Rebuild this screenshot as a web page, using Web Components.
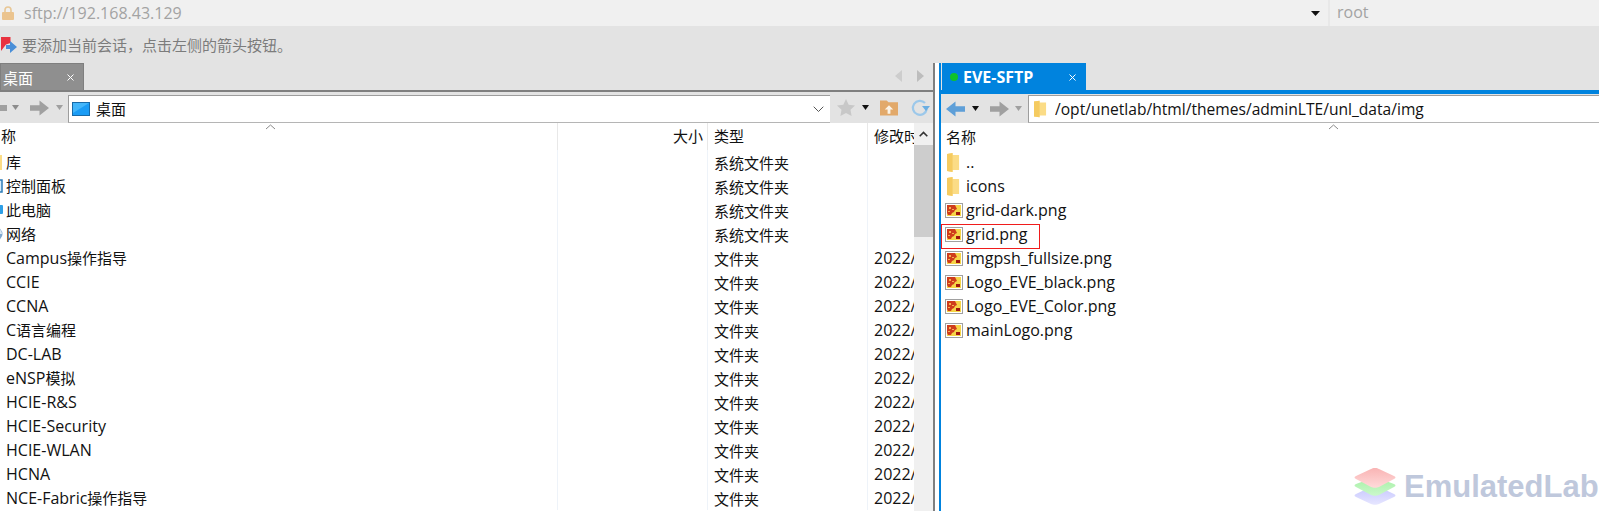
<!DOCTYPE html>
<html lang="zh">
<head>
<meta charset="utf-8">
<title>SFTP</title>
<style>
  html, body { margin: 0; height: 100%; overflow: hidden; background: #fff; }
  body {
    font-family: "Open Sans", "Noto Sans CJK SC", sans-serif;
    font-size: 16px;
    color: #111;
  }
  .app { display: flex; flex-direction: column; height: 511px; position: relative; }
  .cn { font-size: 15px; }
</style>
</head>
<body>

<template id="session-bar-tpl">
  <style>
    :host { display: flex; align-items: center; height: 26px; background: #f0f0f0; color: #a3a3a3; font-size: 16px; flex: none; }
    svg { display: block; }
    .lock { margin-left: 2px; flex: none; }
    .url { margin-left: 10px; flex: 1; }
    .caret { margin-right: 8px; flex: none; }
    .user { width: 271px; height: 26px; line-height: 25px; box-sizing: border-box; padding-left: 7px; border-left: 2px solid #e8e8e8; flex: none; }
  </style>
  <svg class="lock" width="12" height="14" viewBox="0 0 12 14"><path d="M3 6V4a3 3 0 0 1 6 0v2" fill="none" stroke="#e8c796" stroke-width="1.6"/><rect y="6" width="12" height="8" rx="1" fill="#ebc48f"/></svg>
  <span class="url"><slot name="url"></slot></span>
  <svg class="caret" width="9" height="5" viewBox="0 0 9 5"><path d="M0 0h9L4.500 5z" fill="#111"/></svg>
  <span class="user"><slot name="user"></slot></span>
</template>

<template id="hint-bar-tpl">
  <style>
    :host { display: flex; align-items: center; height: 37px; background: #e3e3e3; color: #7c7c7c; font-size: 15px; flex: none; }
    svg { display: block; flex: none; margin-right: 5px; }
  </style>
  <svg width="17" height="18" viewBox="0 0 17 18"><path d="M1 1h9.500v6L6 8.500 1 15z" fill="#e8323f"/><path d="M6 9h4V5l7 6-7 6v-4H6z" fill="#4a8fd8"/></svg>
  <slot></slot>
</template>

<template id="sftp-pane-tpl">
  <style>
    :host { display: flex; flex-direction: column; min-width: 0; }
    .tabs { height: 27px; display: flex; background: #e3e3e3; flex: none; }
    .line { height: 2px; background: #7f7f7f; flex: none; }
    .toolbar { height: 31px; display: flex; background: #e3e3e3; flex: none; align-items: stretch; }
    .list { flex: 1; min-height: 0; display: flex; background: #fff; overflow: hidden; }
    :host([active]) .line { height: 4px; background: #0083de; }
    :host([active]) .toolbar { height: 29px; }
    :host([active]) { border-left: 2px solid #0083de; }
    :host(:not([active])) { border-right: 2px solid #7f7f7f; }
  </style>
  <div class="tabs"><slot name="tabs"></slot></div>
  <div class="line"></div>
  <div class="toolbar"><slot name="toolbar"></slot></div>
  <div class="list"><slot></slot></div>
</template>

<template id="pane-tab-tpl">
  <style>
    :host { display: flex; align-items: center; box-sizing: border-box; color: #fff; font-size: 15px; background: #8f8f8f; border: 1px solid #7f7f7f; border-bottom: 0; flex: none; position: relative; }
    :host([active]) { background: #0083de; border-color: #0083de; font-weight: 700; font-size: 16px; }
    .dot { width: 8px; height: 8px; border-radius: 50%; background: #0fc32a; margin: 0 5px 0 7px; display: none; }
    :host([active]) .dot { display: block; }
    .label { flex: 1; padding-left: 2px; }
    :host([active]) .label { padding-left: 0; }
    svg { display: block; margin-right: 9px; flex: none; }
  </style>
  <span class="dot"></span>
  <span class="label"><slot></slot></span>
  <svg width="7" height="7" viewBox="0 0 7 7"><path d="M.5 .5l6 6M6.500 .5l-6 6" stroke="#fff" stroke-width="1"/></svg>
</template>

<template id="nav-toolbar-tpl">
  <style>
    :host { display: flex; align-items: center; flex: 1; min-width: 0; align-self: stretch; }
    svg { display: block; flex: none; }
    .nav { display: flex; align-items: center; flex: none; }
    .box { flex: 1; min-width: 0; height: 28px; background: #fff; box-sizing: border-box; border-left: 1px solid #9d9d9d; border-top: 1px solid #9d9d9d; border-bottom: 1px solid #b5b5b5; display: flex; align-items: center; align-self: flex-end; }
    .path { flex: 1; white-space: nowrap; overflow: hidden; }
    .extra { display: flex; align-items: center; flex: none; }
  </style>
  <div class="nav"><slot name="nav"></slot></div>
  <div class="box"><slot name="icon"></slot><span class="path"><slot name="path"></slot></span><slot name="drop"></slot></div>
  <div class="extra"><slot name="extra"></slot></div>
</template>

<template id="file-list-tpl">
  <style>
    :host { display: block; flex: 1; min-width: 0; position: relative; }
    .head { display: flex; height: 27px; align-items: center; position: relative; }
    .sort { position: absolute; top: 1px; left: var(--sort-left, 0); display: block; }
  </style>
  <div class="head"><slot name="head"></slot><svg class="sort" width="11" height="6" viewBox="0 0 11 6"><path d="M1 5l4.500-4L10 5" fill="none" stroke="#8a8a8a"/></svg></div>
  <slot></slot>
</template>

<template id="file-row-tpl">
  <style>
    :host { display: grid; grid-template-columns: var(--cols, 1fr); height: 24px; position: relative; white-space: nowrap; }
    :host([marked])::after { content: ""; position: absolute; left: 0; top: 2px; width: 99px; height: 25px; box-sizing: border-box; border: 1px solid #f01c1c; }
    .name, .size, .type, .date { display: flex; align-items: center; min-width: 0; }
    .name { gap: var(--icon-gap, 3px); margin-left: var(--name-left, -11px); }
    svg { display: block; flex: none; }
    .size, .type, .date { border-left: 1px solid #eef3f9; }
    .type, .date { padding-left: 6px; overflow: hidden; }
    :host([plain]) .size, :host([plain]) .type, :host([plain]) .date { display: none; }
  </style>
  <span class="name"><slot name="icon"></slot><span><slot></slot></span></span>
  <span class="size"></span>
  <span class="type"><slot name="type"></slot></span>
  <span class="date"><slot name="date"></slot></span>
</template>

<template id="scroll-bar-tpl">
  <style>
    :host { display: flex; flex-direction: column; width: 19px; background: #f0f0f0; flex: none; }
    .up { height: 22px; display: flex; align-items: center; justify-content: center; }
    .thumb { height: 92px; background: #cdcdcd; }
    svg { display: block; }
  </style>
  <div class="up"><svg width="9" height="6" viewBox="0 0 9 6"><path d="M.7 5.200L4.500 1.400l3.800 3.800" fill="none" stroke="#333" stroke-width="1.600"/></svg></div>
  <div class="thumb"></div>
</template>

<template id="water-mark-tpl">
  <style>
    :host { position: absolute; right: 0; bottom: 6px; width: 246px; height: 37px; display: flex; align-items: center; gap: 7px; font: 700 31px "Liberation Sans", sans-serif; color: #bfc8dc; white-space: nowrap; }
    svg { display: block; flex: none; }
  </style>
  <svg width="44" height="37" viewBox="0 0 44 37">
    <defs>
      <linearGradient id="wm-red" x1="0" y1="0" x2="0" y2="1"><stop offset="0" stop-color="#f9b4b4"/><stop offset="1" stop-color="#ffdada"/></linearGradient>
      <linearGradient id="wm-green" x1="0" y1="0" x2="0" y2="1"><stop offset="0" stop-color="#a5f0a5"/><stop offset="1" stop-color="#cbf8cb"/></linearGradient>
      <linearGradient id="wm-blue" x1="0" y1="0" x2="0" y2="1"><stop offset="0" stop-color="#c4c4ff"/><stop offset="1" stop-color="#e6e6ff"/></linearGradient>
    </defs>
    <path d="M22 17L41 26c2 1 2 2 0 3L26 36c-2 1-6 1-8 0L3 29c-2-1-2-2 0-3z" fill="url(#wm-blue)"/>
    <path d="M22 9L41 16c2 1 2 2 0 3L26 27c-2 1-6 1-8 0L3 19c-2-1-2-2 0-3z" fill="url(#wm-green)"/>
    <path d="M22 0c2 0 3 .5 4 1l15 7c2 1 2 2 0 3L26 19c-2 1-6 1-8 0L3 11c-2-1-2-2 0-3l15-7c1-.5 2-1 4-1z" fill="url(#wm-red)"/>
  </svg>
  <slot></slot>
</template>

<main class="app">
  <session-bar>
    <span slot="url">sftp://192.168.43.129</span>
    <span slot="user">root</span>
  </session-bar>
  <hint-bar>要添加当前会话，点击左侧的箭头按钮。</hint-bar>

  <div style="flex:1;min-height:0;display:grid;grid-template-columns:935px 1fr;background:#fff;column-gap:4px">
    <sftp-pane>
      <pane-tab slot="tabs" style="width:84px">桌面</pane-tab>
      <div slot="tabs" style="flex:1;display:flex;align-items:center;justify-content:flex-end;gap:15px;padding:0 9px 1px 0">
        <svg width="7" height="12" viewBox="0 0 7 12"><path d="M7 0v12L0 6z" fill="#cdcdcd"/></svg>
        <svg width="7" height="12" viewBox="0 0 7 12"><path d="M0 0v12l7-6z" fill="#bdbdbd"/></svg>
      </div>
      <nav-toolbar slot="toolbar">
        <svg slot="nav" width="7" height="6" viewBox="0 0 7 6"><rect width="7" height="6" fill="#a0a0a0"/></svg>
        <svg slot="nav" width="7" height="5" viewBox="0 0 7 5" style="margin-left:5px"><path d="M0 0h7L3.500 5z" fill="#8c8c8c"/></svg>
        <svg slot="nav" width="19" height="16" viewBox="0 0 20 16" style="margin-left:11px"><path d="M0 5h10V0l10 8-10 8v-5H0z" fill="#a0a0a0"/></svg>
        <svg slot="nav" width="7" height="5" viewBox="0 0 7 5" style="margin:0 5px 0 7px"><path d="M0 0h7L3.500 5z" fill="#a0a0a0"/></svg>
        <svg slot="icon" width="18" height="14" viewBox="0 0 18 14" style="margin:0 6px 0 3px"><rect x=".5" y=".5" width="17" height="13" fill="#1a9cf5" stroke="#176aa8"/><path d="M1 1h16L1 11z" fill="#43b6fa"/></svg>
        <span slot="path" class="cn">桌面</span>
        <svg slot="drop" width="11" height="7" viewBox="0 0 11 7" style="margin-right:6px"><path d="M.7 .7L5.500 5.500l4.800-4.800" fill="none" stroke="#555" stroke-width="1"/></svg>
        <svg slot="extra" width="18" height="17" viewBox="0 0 16 15" style="margin-left:7px"><path d="M8 0l2.400 5 5.600.7-4 3.900 1 5.400L8 12.400 3 15l1-5.400-4-3.900L5.600 5z" fill="#c8c8c8"/></svg>
        <svg slot="extra" width="7" height="5" viewBox="0 0 7 5" style="margin-left:7px"><path d="M0 0h7L3.500 5z" fill="#111"/></svg>
        <svg slot="extra" width="18" height="16" viewBox="0 0 19 16" style="margin-left:11px"><path d="M0 0h7l2 2h10v14H0z" fill="#e2a96a"/><path d="M9.500 5l4.500 4.500h-3V14H8V9.500H5z" fill="#fbf3e6"/></svg>
        <svg slot="extra" width="20" height="18" viewBox="0 0 20 18" style="margin:0 3px 0 12px"><path d="M15 4a7 7 0 1 0 1.800 6" fill="none" stroke="#9cc8ea" stroke-width="2.200"/><path d="M12 7h8l-4 5z" fill="#6aaee2"/></svg>
      </nav-toolbar>
      <div style="display:flex;flex:1;min-height:0">
        <file-list id="local" style="--sort-left:265px">
          <div slot="head" style="display:grid;grid-template-columns:557px 150px 160px 47px;width:100%;height:100%;align-items:stretch" class="cn">
            <span style="margin-left:1px;line-height:27px">称</span>
            <span style="border-left:1px solid #e8e8e8;text-align:right;padding-right:4px;line-height:27px">大小</span>
            <span style="border-left:1px solid #e8e8e8;padding-left:6px;line-height:27px">类型</span>
            <span style="border-left:1px solid #e8e8e8;padding-left:6px;line-height:27px;overflow:hidden;white-space:nowrap">修改时间</span>
          </div>
        </file-list>
        <scroll-bar></scroll-bar>
      </div>
    </sftp-pane>

    <sftp-pane active>
      <pane-tab slot="tabs" active style="width:144px;margin-left:1px;height:27px">EVE-SFTP</pane-tab>
      <nav-toolbar slot="toolbar" style="font-size:15.600px">
        <svg slot="nav" width="19" height="16" viewBox="0 0 20 16" style="margin-left:5px"><path d="M20 5H10V0L0 8l10 8v-5h10z" fill="#5e9fd8"/></svg>
        <svg slot="nav" width="7" height="5" viewBox="0 0 7 5" style="margin-left:7px"><path d="M0 0h7L3.500 5z" fill="#111"/></svg>
        <svg slot="nav" width="19" height="16" viewBox="0 0 20 16" style="margin-left:11px"><path d="M0 5h10V0l10 8-10 8v-5H0z" fill="#a0a0a0"/></svg>
        <svg slot="nav" width="7" height="5" viewBox="0 0 7 5" style="margin:0 6px 0 6px"><path d="M0 0h7L3.500 5z" fill="#a0a0a0"/></svg>
        <svg slot="icon" width="13" height="18" viewBox="0 0 14 18" style="margin:0 8px 0 5px"><path d="M0 1l6-1v2h7v14H6v2L0 17z" fill="#fbdc86"/><path d="M0 1l6-1v18l-6-1z" fill="#f5cb60"/></svg>
        <span slot="path">/opt/unetlab/html/themes/adminLTE/unl_data/img</span>
      </nav-toolbar>
      <file-list id="remote" style="--sort-left:387px">
        <span slot="head" class="cn" style="margin-left:5px">名称</span>
      </file-list>
    </sftp-pane>
  </div>

  <water-mark>EmulatedLab</water-mark>
</main>

<script>
function define(name, tplId) {
  customElements.define(name, class extends HTMLElement {
    constructor() {
      super();
      this.attachShadow({ mode: 'open' });
      this.shadowRoot.appendChild(document.getElementById(tplId).content.cloneNode(true));
    }
  });
}

define('session-bar', 'session-bar-tpl');
define('hint-bar', 'hint-bar-tpl');
define('sftp-pane', 'sftp-pane-tpl');
define('pane-tab', 'pane-tab-tpl');
define('nav-toolbar', 'nav-toolbar-tpl');
define('file-list', 'file-list-tpl');
define('file-row', 'file-row-tpl');
define('scroll-bar', 'scroll-bar-tpl');
define('water-mark', 'water-mark-tpl');

const folder = '<svg slot="icon" width="13" height="19" viewBox="0 0 14 18" preserveAspectRatio="none"><path d="M0 1l6-1v2h7v14H6v2L0 17z" fill="#fbdc86"/><path d="M0 1l6-1v18l-6-1z" fill="#f5cb60"/></svg>';
const image = '<svg slot="icon" width="18" height="15" viewBox="0 0 18 15"><rect x=".5" y=".5" width="17" height="14" fill="#fff" stroke="#a0a0a0"/><rect x="2" y="2" width="14" height="11" fill="#f6d548"/><path d="M2 2h8l1 2 1 2-2 1-1 2-2 1-1 2H3L2 10z" fill="#cf3d1c"/><path d="M4 4h2v2H4zM7 6h2v1H7zM3 8h2v1H3z" fill="#f6b24e"/><rect x="11" y="9" width="4" height="3" fill="#a0160e"/></svg>';
const panel = '<svg slot="icon" width="14" height="14" viewBox="0 0 14 14"><rect x="1" y="1" width="12" height="12" fill="#d6ecfb" stroke="#2c7cb8" stroke-width="1.500"/></svg>';
const pc = '<svg slot="icon" width="14" height="14" viewBox="0 0 14 14"><rect y="2" width="14" height="9" rx="1" fill="#2e9fe6"/><rect x="4" y="11" width="6" height="2" fill="#888"/></svg>';
const globe = '<svg slot="icon" width="14" height="14" viewBox="0 0 14 14"><circle cx="7" cy="7" r="6.500" fill="#7fa8cf"/><path d="M7 1a6 6 0 0 1 6 6H7z" fill="#dbe8f3"/></svg>';
const blank = '<svg slot="icon" width="14" height="14" viewBox="0 0 14 14"></svg>';

// 中文用 15px，西文用 16px
const cn = s => s.replace(/[\u4e00-\u9fff]+/g, '<span class="cn">$&</span>');

// 左侧：本地目录
const localRows = [
  ['库', '系统文件夹', '', folder.replace('width="13"', 'width="14"')],
  ['控制面板', '系统文件夹', '', panel],
  ['此电脑', '系统文件夹', '', pc],
  ['网络', '系统文件夹', '', globe],
  ['Campus操作指导', '文件夹', '2022/'],
  ['CCIE', '文件夹', '2022/'],
  ['CCNA', '文件夹', '2022/'],
  ['C语言编程', '文件夹', '2022/'],
  ['DC-LAB', '文件夹', '2022/'],
  ['eNSP模拟', '文件夹', '2022/'],
  ['HCIE-R&amp;S', '文件夹', '2022/'],
  ['HCIE-Security', '文件夹', '2022/'],
  ['HCIE-WLAN', '文件夹', '2022/'],
  ['HCNA', '文件夹', '2022/'],
  ['NCE-Fabric操作指导', '文件夹', '2022/']
];
document.getElementById('local').insertAdjacentHTML('beforeend', localRows.map(r =>
  `<file-row style="--cols:557px 150px 160px 47px">${r[3] || blank}${cn(r[0])}<span slot="type" class="cn">${r[1]}</span><span slot="date">${r[2]}</span></file-row>`
).join(''));

// 右侧：远程目录
const remoteRows = [
  ['..', folder], ['icons', folder], ['grid-dark.png', image], ['grid.png', image, true],
  ['imgpsh_fullsize.png', image], ['Logo_EVE_black.png', image], ['Logo_EVE_Color.png', image], ['mainLogo.png', image]
];
document.getElementById('remote').insertAdjacentHTML('beforeend', remoteRows.map(r => {
  const isFolder = r[1] === folder;
  return `<file-row plain ${r[2] ? 'marked' : ''} style="--name-left:${isFolder ? 6 : 4}px;--icon-gap:${isFolder ? 6 : 3}px">${r[1]}${r[0]}</file-row>`;
}).join(''));
</script>
</body>
</html>
